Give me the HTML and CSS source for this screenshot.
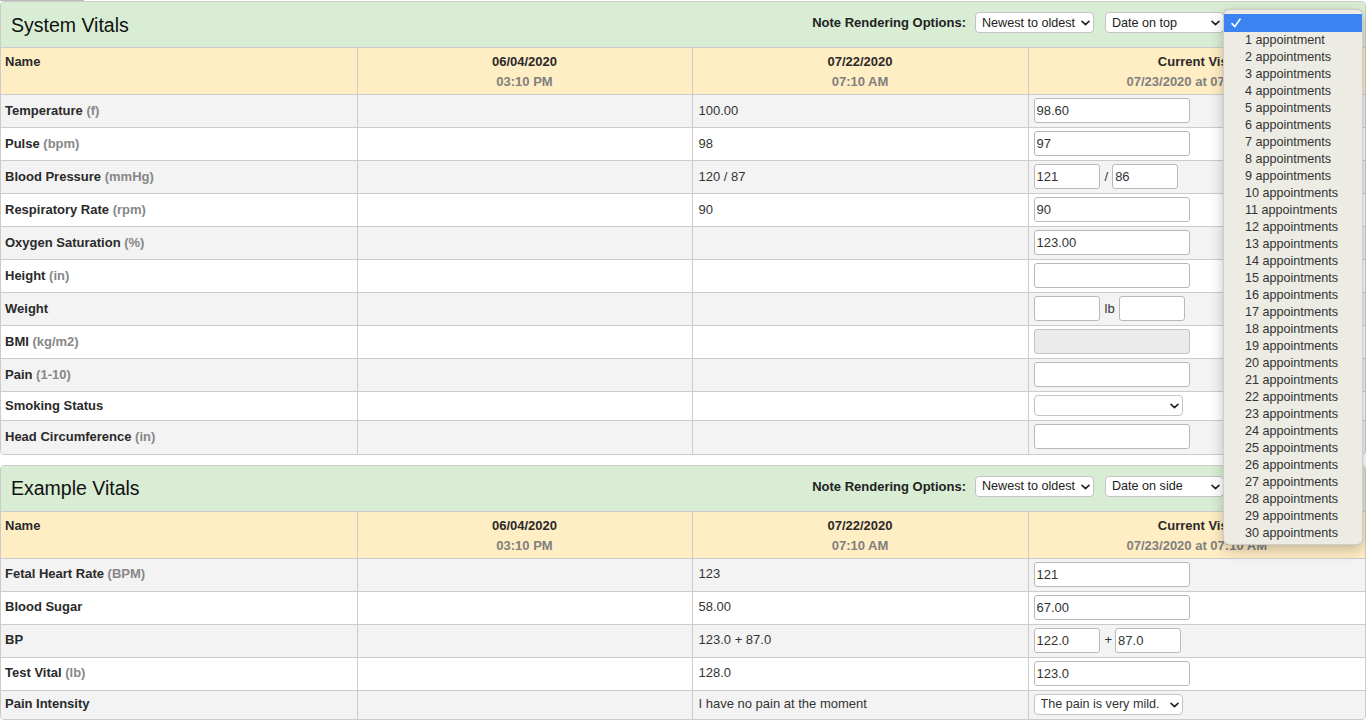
FILE: index.html
```html
<!DOCTYPE html>
<html lang="en">
<head>
<meta charset="utf-8">
<title>Vitals</title>
<link rel="stylesheet" href="styles.css">
</head>
<body>
<div class="topline"></div>

<section class="panel">
  <div class="panel-heading">
    <h3 class="panel-title">System Vitals</h3>
    <div class="options">
      <span class="options-label">Note Rendering Options:</span>
      <span class="sel sel-order"><select><option>Newest to oldest</option></select><svg class="chev" viewBox="0 0 10 6" width="10" height="6"><path d="M1.2 1.2 L5 4.8 L8.8 1.2"/></svg></span>
      <span class="sel sel-date"><select><option>Date on top</option></select><svg class="chev" viewBox="0 0 10 6" width="10" height="6"><path d="M1.2 1.2 L5 4.8 L8.8 1.2"/></svg></span>
      <span class="sel sel-count"><select><option></option></select><svg class="chev" viewBox="0 0 10 6" width="10" height="6"><path d="M1.2 1.2 L5 4.8 L8.8 1.2"/></svg></span>
    </div>
  </div>
  <table class="vitals">
    <colgroup><col class="c1"><col class="c2"><col class="c3"><col class="c4"></colgroup>
    <thead>
      <tr>
        <th class="name">Name</th>
        <th class="date">06/04/2020<span class="time">03:10 PM</span></th>
        <th class="date">07/22/2020<span class="time">07:10 AM</span></th>
        <th class="date">Current Visit<span class="time">07/23/2020 at 07:10 AM</span></th>
      </tr>
    </thead>
    <tbody>
      <tr><th>Temperature <span class="unit">(f)</span></th><td></td><td>100.00</td><td><input class="inp" value="98.60"></td></tr>
      <tr><th>Pulse <span class="unit">(bpm)</span></th><td></td><td>98</td><td><input class="inp" value="97"></td></tr>
      <tr><th>Blood Pressure <span class="unit">(mmHg)</span></th><td></td><td>120 / 87</td><td><div class="pair"><input class="inp half" value="121"><span class="sep">/</span><input class="inp half" value="86"></div></td></tr>
      <tr><th>Respiratory Rate <span class="unit">(rpm)</span></th><td></td><td>90</td><td><input class="inp" value="90"></td></tr>
      <tr><th>Oxygen Saturation <span class="unit">(%)</span></th><td></td><td></td><td><input class="inp" value="123.00"></td></tr>
      <tr><th>Height <span class="unit">(in)</span></th><td></td><td></td><td><input class="inp" value=""></td></tr>
      <tr><th>Weight</th><td></td><td></td><td><div class="pair"><input class="inp half" value=""><span class="sep">lb</span><input class="inp half" value=""></div></td></tr>
      <tr><th>BMI <span class="unit">(kg/m2)</span></th><td></td><td></td><td><input class="inp" value="" disabled></td></tr>
      <tr><th>Pain <span class="unit">(1-10)</span></th><td></td><td></td><td><input class="inp" value=""></td></tr>
      <tr class="sel-row"><th>Smoking Status</th><td></td><td></td><td><span class="sel sel-cell"><select><option></option></select><svg class="chev" viewBox="0 0 10 6" width="10" height="6"><path d="M1.2 1.2 L5 4.8 L8.8 1.2"/></svg></span></td></tr>
      <tr><th>Head Circumference <span class="unit">(in)</span></th><td></td><td></td><td><input class="inp" value=""></td></tr>
    </tbody>
  </table>
</section>

<section class="panel">
  <div class="panel-heading">
    <h3 class="panel-title">Example Vitals</h3>
    <div class="options">
      <span class="options-label">Note Rendering Options:</span>
      <span class="sel sel-order"><select><option>Newest to oldest</option></select><svg class="chev" viewBox="0 0 10 6" width="10" height="6"><path d="M1.2 1.2 L5 4.8 L8.8 1.2"/></svg></span>
      <span class="sel sel-date"><select><option>Date on side</option></select><svg class="chev" viewBox="0 0 10 6" width="10" height="6"><path d="M1.2 1.2 L5 4.8 L8.8 1.2"/></svg></span>
      <span class="sel sel-count"><select><option></option></select><svg class="chev" viewBox="0 0 10 6" width="10" height="6"><path d="M1.2 1.2 L5 4.8 L8.8 1.2"/></svg></span>
    </div>
  </div>
  <table class="vitals">
    <colgroup><col class="c1"><col class="c2"><col class="c3"><col class="c4"></colgroup>
    <thead>
      <tr>
        <th class="name">Name</th>
        <th class="date">06/04/2020<span class="time">03:10 PM</span></th>
        <th class="date">07/22/2020<span class="time">07:10 AM</span></th>
        <th class="date">Current Visit<span class="time">07/23/2020 at 07:10 AM</span></th>
      </tr>
    </thead>
    <tbody>
      <tr><th>Fetal Heart Rate <span class="unit">(BPM)</span></th><td></td><td>123</td><td><input class="inp" value="121"></td></tr>
      <tr><th>Blood Sugar</th><td></td><td>58.00</td><td><input class="inp" value="67.00"></td></tr>
      <tr><th>BP</th><td></td><td>123.0 + 87.0</td><td><div class="pair"><input class="inp half" value="122.0"><span class="sep plus">+</span><input class="inp half" value="87.0"></div></td></tr>
      <tr><th>Test Vital <span class="unit">(lb)</span></th><td></td><td>128.0</td><td><input class="inp" value="123.0"></td></tr>
      <tr class="sel-row"><th>Pain Intensity</th><td></td><td>I have no pain at the moment</td><td><span class="sel sel-cell"><select><option>The pain is very mild.</option></select><svg class="chev" viewBox="0 0 10 6" width="10" height="6"><path d="M1.2 1.2 L5 4.8 L8.8 1.2"/></svg></span></td></tr>
    </tbody>
  </table>
</section>

<div class="menu" role="listbox">
  <div class="menu-item selected"><svg class="check" viewBox="0 0 10 10" width="10" height="10"><path d="M1 5.6 L3.8 8.6 L9 1.2"/></svg></div>
  <div class="menu-item">1 appointment</div>
  <div class="menu-item">2 appointments</div>
  <div class="menu-item">3 appointments</div>
  <div class="menu-item">4 appointments</div>
  <div class="menu-item">5 appointments</div>
  <div class="menu-item">6 appointments</div>
  <div class="menu-item">7 appointments</div>
  <div class="menu-item">8 appointments</div>
  <div class="menu-item">9 appointments</div>
  <div class="menu-item">10 appointments</div>
  <div class="menu-item">11 appointments</div>
  <div class="menu-item">12 appointments</div>
  <div class="menu-item">13 appointments</div>
  <div class="menu-item">14 appointments</div>
  <div class="menu-item">15 appointments</div>
  <div class="menu-item">16 appointments</div>
  <div class="menu-item">17 appointments</div>
  <div class="menu-item">18 appointments</div>
  <div class="menu-item">19 appointments</div>
  <div class="menu-item">20 appointments</div>
  <div class="menu-item">21 appointments</div>
  <div class="menu-item">22 appointments</div>
  <div class="menu-item">23 appointments</div>
  <div class="menu-item">24 appointments</div>
  <div class="menu-item">25 appointments</div>
  <div class="menu-item">26 appointments</div>
  <div class="menu-item">27 appointments</div>
  <div class="menu-item">28 appointments</div>
  <div class="menu-item">29 appointments</div>
  <div class="menu-item">30 appointments</div>
</div>
</body>
</html>
```

FILE: styles.css
```css
* { box-sizing: border-box; }

html, body {
  margin: 0;
  padding: 0;
  background: #ffffff;
}

body {
  font-family: "Liberation Sans", Arial, Helvetica, sans-serif;
  font-size: 13px;
  color: #333333;
  position: relative;
  overflow: hidden;
  height: 721px;
}

.topline {
  width: 84px;
  height: 1px;
  background: #bdbdbd;
}

.panel {
  border: 1px solid #cbcbcb;
  border-radius: 4px;
  overflow: hidden;
  margin-bottom: 10px;
  background: #ffffff;
}

.panel-heading {
  height: 45px;
  background: #d8edd4;
  display: flex;
  align-items: center;
  justify-content: space-between;
  padding: 0 10px 0 10px;
}

.panel-title {
  margin: 0;
  font-size: 19.5px;
  font-weight: normal;
  color: #111111;
  padding-top: 1px;
}

.options {
  display: flex;
  align-items: center;
  padding-bottom: 4px;
}

.options-label {
  font-weight: bold;
  color: #222222;
  margin-right: 9px;
}

.sel {
  position: relative;
  display: inline-block;
}

.sel select {
  appearance: none;
  -webkit-appearance: none;
  display: block;
  height: 21px;
  border: 1px solid #c4c4c4;
  border-radius: 4px;
  background: #ffffff;
  font-family: "Liberation Sans", Arial, Helvetica, sans-serif;
  font-size: 12.6px;
  color: #222222;
  padding: 0 12px 0 6px;
  margin: 0;
  outline: none;
}

.sel .chev {
  position: absolute;
  right: 4px;
  top: 8px;
  width: 9px;
  height: 6px;
  fill: none;
  stroke: #222222;
  stroke-width: 1.8;
  stroke-linecap: round;
  stroke-linejoin: round;
  pointer-events: none;
}

.sel-order select { width: 119px; }
.sel-date { margin-left: 11px; }
.sel-date select { width: 119px; }
.sel-count { margin-left: 11px; }
.sel-count select { width: 120px; }

.vitals {
  width: 100%;
  border-collapse: collapse;
  table-layout: fixed;
}

.vitals col.c1 { width: 356px; }
.vitals col.c2 { width: 335px; }
.vitals col.c3 { width: 336px; }

.vitals th,
.vitals td {
  border-top: 1px solid #cbcbcb;
  border-left: 1px solid #cbcbcb;
  text-align: left;
  line-height: 18px;
  padding: 3px 5px 4px 4px;
  vertical-align: middle;
  white-space: nowrap;
  overflow: hidden;
}

.vitals th:first-child,
.vitals td:first-child {
  border-left: none;
}

.vitals thead th {
  background: #ffedc3;
  vertical-align: top;
  line-height: 20px;
  padding: 4px 5px 2px 4px;
  height: 47px;
  color: #2a2a2a;
}

.vitals thead th.date {
  text-align: center;
  padding-left: 5px;
}

.vitals thead .time {
  display: block;
  color: #808080;
}

.vitals tbody th {
  font-weight: bold;
  color: #2a2a2a;
}

.vitals tbody tr:nth-child(odd) th,
.vitals tbody tr:nth-child(odd) td {
  background: #f3f3f3;
}

.vitals tbody tr:nth-child(even) th,
.vitals tbody tr:nth-child(even) td {
  background: #ffffff;
}

.vitals tbody td {
  color: #333333;
  padding-left: 6px;
}

.vitals tbody td:last-child {
  padding-left: 5px;
}

.vitals tbody tr {
  height: 33px;
}

.vitals tbody tr.sel-row {
  height: 29px;
}

.unit {
  color: #878787;
}

.inp {
  display: block;
  width: 156px;
  height: 25px;
  border: 1px solid #b9b9b9;
  border-radius: 3px;
  background: #ffffff;
  font-family: "Liberation Sans", Arial, Helvetica, sans-serif;
  font-size: 13px;
  color: #333333;
  padding: 0 2px;
  margin: 0;
  outline: none;
}

.inp:disabled {
  background: #ebebeb;
  border-color: #c4c4c4;
}

.pair {
  display: flex;
  align-items: center;
}

.inp.half {
  width: 66px;
}

.sep {
  padding: 0 4px 0 5px;
  color: #333333;
}

.sep.plus {
  padding: 0 3px 0 5px;
}

.sel-cell select {
  width: 149px;
  height: 21px;
  font-size: 12.6px;
  padding-left: 6px;
  border-color: #c4c4c4;
  color: #333333;
}

.menu {
  position: absolute;
  left: 1223px;
  top: 9px;
  width: 140px;
  height: 536px;
  padding: 4px 0;
  background: #ecebe4;
  border: 1px solid rgba(0, 0, 0, 0.12);
  border-radius: 6px;
  box-shadow: 0 5px 14px rgba(0, 0, 0, 0.22), 0 0 1px rgba(0, 0, 0, 0.2);
}

.menu-item {
  height: 17px;
  line-height: 17px;
  padding-left: 21px;
  font-size: 12.6px;
  color: #333333;
  white-space: nowrap;
  display: flex;
  align-items: center;
}

.menu-item.selected {
  background: #3a83f1;
  padding-left: 7px;
  height: 18px;
}

.check {
  fill: none;
  stroke: #ffffff;
  stroke-width: 1.6;
  stroke-linecap: round;
  stroke-linejoin: round;
}
```
